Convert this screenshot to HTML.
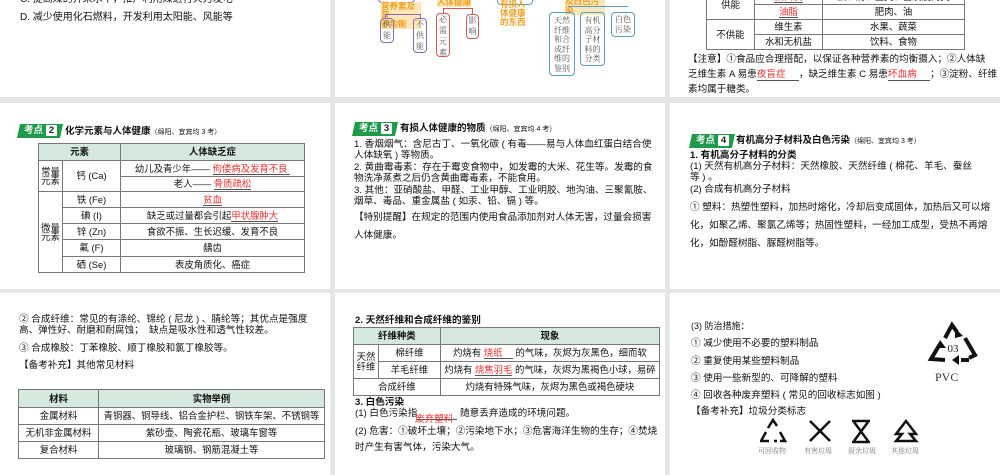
<!DOCTYPE html>
<html><head><meta charset="utf-8"><style>
*{margin:0;padding:0;box-sizing:border-box}
body{width:1000px;height:475px;background:#e6e6e6;position:relative;overflow:hidden;font-family:"Liberation Sans","Noto Sans CJK SC",sans-serif;color:#111;font-size:9.6px}
.p{position:absolute;background:#fff;overflow:hidden}
.a{position:absolute;white-space:nowrap;line-height:1}
.b{font-weight:bold}
.red{color:#e8312f}
.u{border-bottom:1px solid #555}
table{position:absolute;border-collapse:collapse;font-size:9.4px}
td{border:1px solid #777;text-align:center;padding:0;line-height:1}
th{border:1px solid #777;background:#d5e8dd;font-weight:bold;line-height:1}
.badge{position:absolute;height:14px;background:#1e9a4a;color:#fff;font-weight:bold;font-size:9.5px;line-height:14px;padding-left:7px;white-space:nowrap;clip-path:polygon(3px 0,100% 0,calc(100% - 3px) 100%,0 100%)}
.badge span{display:inline-block;background:#fff;color:#222;width:11px;height:11px;line-height:11px;text-align:center;margin-left:3px;border-radius:1px;vertical-align:middle}
.bx{position:absolute;border:1.3px solid;border-radius:4px;font-size:8px;line-height:11px;text-align:center;color:#555;font-family:"Noto Serif CJK SC",serif}
.pu{border-color:#8a6bb0}.rd{border-color:#d05a5a}.bl{border-color:#5a9ac0}
.or{position:absolute;color:#f0a020;font-weight:bold;font-size:8.5px;line-height:9px;background:#fde6b8}
</style></head><body>

<div class="p" style="left:0;top:0;width:330px;height:97px">
<div class="a" style="left:20px;top:-5px;font-size:10px">C. 提高煤的开采水平，推广利用煤进行火力发电</div>
<div class="a" style="left:20px;top:13px;font-size:10px">D. 减少使用化石燃料，开发利用太阳能、风能等</div>
</div>

<div class="p" style="left:335px;top:0;width:330px;height:97px">
<div class="bx pu" style="left:43px;top:-8px;width:37px;height:11px"></div>
<div class="or" style="left:46px;top:2px;width:40px">营养素及营<br>养均衡</div>
<div style="position:absolute;left:50px;top:14px;width:36px;height:5px;border-top:1px solid #8a6bb0;border-left:1px solid #8a6bb0;border-right:1px solid #8a6bb0"></div>
<div class="bx pu" style="left:45px;top:18px;width:14px;height:25px">供<br>能</div>
<div class="bx pu" style="left:78px;top:18px;width:14px;height:35px">不<br>供<br>能</div>
<div class="or" style="left:102px;top:-2px;width:34px">人体健康</div>
<div style="position:absolute;left:108px;top:8px;width:30px;height:6px;border-top:1px solid #d05a5a;border-left:1px solid #d05a5a;border-right:1px solid #d05a5a"></div>
<div class="bx rd" style="left:101px;top:13px;width:14px;height:44px">必<br>需<br>元<br>素</div>
<div class="bx rd" style="left:131px;top:14px;width:13px;height:25px">影<br>响</div>
<div class="bx bl" style="left:162px;top:-8px;width:36px;height:13px"></div>
<div class="or" style="left:165px;top:0px;width:30px;background:none">有损人<br>体健康<br>的东西</div>
<div class="or" style="left:230px;top:-3px;width:40px">及白色污染</div>
<div style="position:absolute;left:233px;top:6px;width:60px;height:6px;border-top:1px solid #5a9ac0"></div>
<div class="bx bl" style="left:214px;top:12px;width:26px;height:64px;line-height:9.5px;padding-top:3px">天然<br>纤维<br>和合<br>成纤<br>维的<br>鉴别</div>
<div class="bx bl" style="left:245px;top:12px;width:25px;height:54px;line-height:9.5px;padding-top:3px">有机<br>高分<br>子材<br>料的<br>分类</div>
<div class="bx bl" style="left:276px;top:12px;width:24px;height:25px;line-height:9.5px;padding-top:2px">白色<br>污染</div>
</div>

<div class="p" style="left:670px;top:0;width:330px;height:97px">
<table style="left:36px;top:-11px;width:259px">
<tr style="height:15px"><td rowspan="2" style="width:48px">供能</td><td style="width:68px"><span class="red u">蛋白质</span></td><td>蛋、奶、豆类、畜及瘦肉类</td></tr>
<tr style="height:15px"><td><span class="red u">油脂</span></td><td>肥肉、油</td></tr>
<tr style="height:15px"><td rowspan="2">不供能</td><td>维生素</td><td>水果、蔬菜</td></tr>
<tr style="height:15px"><td>水和无机盐</td><td>饮料、食物</td></tr>
</table>
<div class="a" style="left:18px;top:55px">【注意】①食品应合理搭配，以保证各种营养素的均衡摄入；②人体缺</div>
<div class="a" style="left:18px;top:70px">乏维生素 A 易患<span class="red u">夜盲症&nbsp;&nbsp;&nbsp;&nbsp;&nbsp;</span>，缺乏维生素 C 易患<span class="red u">坏血病&nbsp;&nbsp;&nbsp;&nbsp;&nbsp;</span>；③淀粉、纤维</div>
<div class="a" style="left:18px;top:85px">素均属于糖类。</div>
</div>

<div class="p" style="left:0;top:103px;width:330px;height:186px">
<div class="badge" style="left:17px;top:21px;width:46px">考点<span>2</span></div>
<div class="a b" style="left:65px;top:24px;font-size:9.5px">化学元素与人体健康<span style="font-size:7px;font-weight:normal">（绵阳、宜宾均 3 考）</span></div>
<table style="left:38px;top:40px;width:267px">
<tr style="height:17px"><th colspan="2">元素</th><th>人体缺乏症</th></tr>
<tr style="height:16px"><td rowspan="2" style="width:24px">常量<br>元素</td><td rowspan="2" style="width:58px">钙 (Ca)</td><td>幼儿及青少年—— <span class="red u">佝偻病及发育不良&nbsp;</span></td></tr>
<tr style="height:15px"><td>老人—— <span class="red u">骨质疏松</span></td></tr>
<tr style="height:16px"><td rowspan="5">微量<br>元素</td><td>铁 (Fe)</td><td><span class="red u">贫血</span></td></tr>
<tr style="height:16px"><td>碘 (I)</td><td>缺乏或过量都会引起<span class="red u">甲状腺肿大</span></td></tr>
<tr style="height:16px"><td>锌 (Zn)</td><td>食欲不振、生长迟缓、发育不良</td></tr>
<tr style="height:17px"><td>氟 (F)</td><td>龋齿</td></tr>
<tr style="height:16px"><td>硒 (Se)</td><td>表皮角质化、癌症</td></tr>
</table>
</div>

<div class="p" style="left:335px;top:103px;width:330px;height:186px">
<div class="badge" style="left:17px;top:19px;width:46px">考点<span>3</span></div>
<div class="a b" style="left:65px;top:21px;font-size:9.5px">有损人体健康的物质<span style="font-size:7px;font-weight:normal">（绵阳、宜宾均 4 考）</span></div>
<div class="a" style="left:19px;top:37px">1. 香烟烟气：含尼古丁、一氧化碳 ( 有毒——易与人体血红蛋白结合使</div>
<div class="a" style="left:19px;top:48px">人体缺氧 ) 等物质。</div>
<div class="a" style="left:19px;top:60px">2. 黄曲霉毒素：存在于霉变食物中，如发霉的大米、花生等。发霉的食</div>
<div class="a" style="left:19px;top:71px">物洗净蒸煮之后仍含黄曲霉毒素，不能食用。</div>
<div class="a" style="left:19px;top:83px">3. 其他：亚硝酸盐、甲醛、工业甲醇、工业明胶、地沟油、三聚氰胺、</div>
<div class="a" style="left:19px;top:94px">烟草、毒品、重金属盐 ( 如汞、铅、镉 ) 等。</div>
<div class="a" style="left:19px;top:110px">【特别提醒】在规定的范围内使用食品添加剂对人体无害，过量会损害</div>
<div class="a" style="left:19px;top:128px">人体健康。</div>
</div>

<div class="p" style="left:670px;top:103px;width:330px;height:186px">
<div class="badge" style="left:19px;top:31px;width:46px">考点<span>4</span></div>
<div class="a b" style="left:66px;top:33px;font-size:9.5px">有机高分子材料及白色污染<span style="font-size:7px;font-weight:normal">（绵阳、宜宾均 3 考）</span></div>
<div class="a b" style="left:20px;top:48px">1. 有机高分子材料的分类</div>
<div class="a" style="left:20px;top:59px">(1) 天然有机高分子材料：天然橡胶、天然纤维 ( 棉花、羊毛、蚕丝</div>
<div class="a" style="left:20px;top:70px">等 ) 。</div>
<div class="a" style="left:20px;top:82px">(2) 合成有机高分子材料</div>
<div class="a" style="left:20px;top:100px">① 塑料：热塑性塑料，加热时熔化，冷却后变成固体，加热后又可以熔</div>
<div class="a" style="left:20px;top:118px">化，如聚乙烯、聚氯乙烯等；热固性塑料，一经加工成型，受热不再熔</div>
<div class="a" style="left:20px;top:136px">化，如酚醛树脂、脲醛树脂等。</div>
</div>

<div class="p" style="left:0;top:293px;width:330px;height:182px">
<div class="a" style="left:19px;top:22px">② 合成纤维：常见的有涤纶、锦纶 ( 尼龙 ) 、腈纶等；其优点是强度</div>
<div class="a" style="left:19px;top:33px">高、弹性好、耐磨和耐腐蚀；&nbsp;&nbsp;缺点是吸水性和透气性较差。</div>
<div class="a" style="left:19px;top:51px">③ 合成橡胶：丁苯橡胶、顺丁橡胶和氯丁橡胶等。</div>
<div class="a" style="left:19px;top:68px">【备考补充】其他常见材料</div>
<table style="left:18px;top:96px;width:307px">
<tr style="height:18px"><th style="width:80px">材料</th><th>实物举例</th></tr>
<tr style="height:17px"><td>金属材料</td><td>青铜器、铜导线、铝合金护栏、钢铁车架、不锈钢等</td></tr>
<tr style="height:17px"><td>无机非金属材料</td><td>紫砂壶、陶瓷花瓶、玻璃车窗等</td></tr>
<tr style="height:17px"><td>复合材料</td><td>玻璃钢、钢筋混凝土等</td></tr>
</table>
</div>

<div class="p" style="left:335px;top:293px;width:330px;height:182px">
<div class="a b" style="left:20px;top:23px">2. 天然纤维和合成纤维的鉴别</div>
<table style="left:18px;top:34px;width:307px">
<tr style="height:17px"><th colspan="2" style="width:85px">纤维种类</th><th>现象</th></tr>
<tr style="height:17px"><td rowspan="2" style="width:25px">天然<br>纤维</td><td>棉纤维</td><td>灼烧有 <span class="red u">烧纸&nbsp;&nbsp;&nbsp;&nbsp;</span> 的气味，灰烬为灰黑色，细而软</td></tr>
<tr style="height:17px"><td>羊毛纤维</td><td>灼烧有 <span class="red u">烧焦羽毛</span> 的气味，灰烬为黑褐色小球，易碎</td></tr>
<tr style="height:17px"><td colspan="2">合成纤维</td><td>灼烧有特殊气味，灰烬为黑色或褐色硬块</td></tr>
</table>
<div class="a b" style="left:20px;top:105px">3. 白色污染</div>
<div class="a" style="left:20px;top:116px">(1) 白色污染指<span class="u">&nbsp;&nbsp;&nbsp;&nbsp;&nbsp;&nbsp;&nbsp;&nbsp;&nbsp;&nbsp;&nbsp;&nbsp;&nbsp;&nbsp;&nbsp;</span> 随意丢弃造成的环境问题。</div>
<div class="a red" style="left:80px;top:122px">废弃塑料</div>
<div class="a" style="left:20px;top:134px">(2) 危害：①破坏土壤；②污染地下水；③危害海洋生物的生存；④焚烧</div>
<div class="a" style="left:20px;top:150px">时产生有害气体，污染大气。</div>
</div>

<div class="p" style="left:670px;top:293px;width:330px;height:182px">
<div class="a" style="left:21px;top:29px;font-size:9px">(3) 防治措施：</div>
<div class="a" style="left:21px;top:46px">① 减少使用不必要的塑料制品</div>
<div class="a" style="left:21px;top:64px">② 重复使用某些塑料制品</div>
<div class="a" style="left:21px;top:81px">③ 使用一些新型的、可降解的塑料</div>
<div class="a" style="left:21px;top:98px">④ 回收各种废弃塑料 ( 常见的回收标志如图 )</div>
<div class="a" style="left:21px;top:114px">【备考补充】垃圾分类标志</div>
<svg style="position:absolute;left:255px;top:27px" width="56" height="48" viewBox="0 0 56 48">
<g fill="none" stroke="#111" stroke-width="4">
<path d="M20 18 L27 5 L32 12"/><path d="M40 18 L50 35 L44 38"/><path d="M15 24 L6 39 L20 40"/><path d="M36 40 L44 40"/>
</g>
<g fill="#111"><path d="M30 8 L38 16 L30 18Z"/><path d="M15 20 L21 28 L11 28Z"/><path d="M34 35 L34 45 L27 40Z"/></g>
<text x="28" y="32" font-size="11" text-anchor="middle" font-family="Liberation Serif,serif" fill="#222">03</text>
</svg>
<div class="a" style="left:265px;top:78px;font-size:12px;font-family:'Liberation Serif',serif;color:#333">PVC</div>
<svg style="position:absolute;left:90px;top:125px" width="170" height="28" viewBox="0 0 170 28">
<g fill="none" stroke="#111" stroke-width="2.5">
<path d="M8 10 L13 2 L17 8"/><path d="M20 14 L25 23 L20 23"/><path d="M6 14 L1 23 L9 23"/><path d="M14 23 L17 23"/>
<path d="M50 3 L70 23 M70 3 L50 23"/>
<path d="M92 3 L110 3 M92 24 L110 24 M94 4 L108 23 M108 4 L94 23"/>
<path d="M146 3 L136 16 L142 16 L136 23 L156 23 L150 16 L156 16 Z"/>
</g>
</svg>
<div class="a" style="left:88px;top:155px;font-size:7px;color:#777;font-family:'Noto Serif CJK SC',serif">可回收物</div>
<div class="a" style="left:134px;top:155px;font-size:7px;color:#777;font-family:'Noto Serif CJK SC',serif">有害垃圾</div>
<div class="a" style="left:178px;top:155px;font-size:7px;color:#777;font-family:'Noto Serif CJK SC',serif">厨余垃圾</div>
<div class="a" style="left:221px;top:155px;font-size:7px;color:#777;font-family:'Noto Serif CJK SC',serif">其他垃圾</div>
</div>

</body></html>
